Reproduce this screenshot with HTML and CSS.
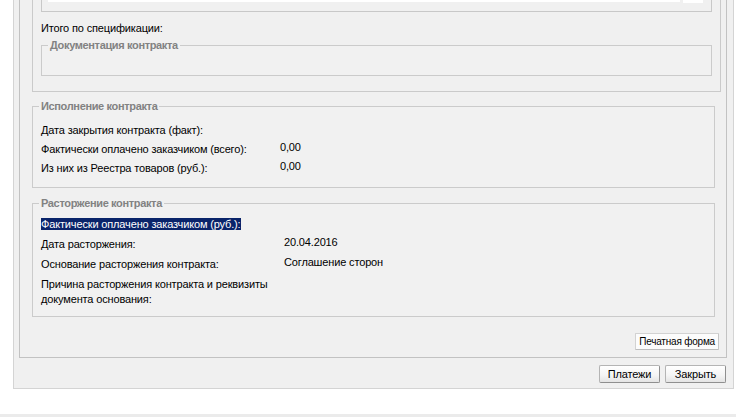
FILE: index.html
```html
<!DOCTYPE html>
<html lang="ru">
<head>
<meta charset="utf-8">
<title>Контракт</title>
<link rel="stylesheet" href="styles.css">
</head>
<body>
<div class="window">
  <div class="panel">
    <div class="spec">
      <div class="spec-table"><div class="tbl-white"></div><div class="tbl-scroll"></div></div>
      <div class="spec-total">Итого по спецификации:</div>
      <fieldset class="group group-doc">
        <legend>Документация контракта</legend>
        <div class="doc-body"></div>
      </fieldset>
    </div>

    <fieldset class="group group-exec">
      <legend>Исполнение контракта</legend>
      <div class="rows rows-exec">
        <div class="cell">Дата закрытия контракта (факт):</div><div class="cell value"></div>
        <div class="cell">Фактически оплачено заказчиком (всего):</div><div class="cell value">0,00</div>
        <div class="cell">Из них из Реестра товаров (руб.):</div><div class="cell value">0,00</div>
      </div>
    </fieldset>

    <fieldset class="group group-term">
      <legend>Расторжение контракта</legend>
      <div class="rows rows-term">
        <div class="cell"><span class="selected">Фактически оплачено заказчиком (руб.):</span></div><div class="cell value"></div>
        <div class="cell">Дата расторжения:</div><div class="cell value">20.04.2016</div>
        <div class="cell">Основание расторжения контракта:</div><div class="cell value">Соглашение сторон</div>
        <div class="cell">Причина расторжения контракта и реквизиты документа основания:</div><div class="cell value"></div>
      </div>
    </fieldset>

    <div class="panel-actions"><button class="btn btn-flat">Печатная форма</button></div>
  </div>
  <div class="window-actions">
    <button class="btn btn-window">Платежи</button>
    <button class="btn btn-window">Закрыть</button>
  </div>
</div>
<div class="footer-strip"></div>
</body>
</html>
```

FILE: styles.css
```css
html, body {
  margin: 0;
  padding: 0;
  background: #ffffff;
  overflow: hidden;
}
body {
  font-family: "Liberation Sans", Arial, sans-serif;
  font-size: 11px;
  line-height: 15px;
  letter-spacing: -0.15px;
  color: #000000;
}

.window {
  box-sizing: border-box;
  width: 721px;
  margin-left: 13px;
  background: #f0f0f0;
  border: 1px solid #d4d4d4;
  border-top: 0;
  padding: 0 6px 5px 5px;
}

.panel {
  border: 1px solid #c2c2c2;
  border-top: 0;
  padding: 0 5px 7px 12px;
  background: #f0f0f0;
}

.spec {
  border: 1px solid #cacaca;
  border-top: 0;
  padding: 0 8px 15px 8px;
}

.spec-table {
  height: 11px;
  border: 1px solid #c8c8c8;
  border-top: 0;
  display: flex;
  align-items: flex-start;
}
.tbl-white {
  margin-left: 6px;
  width: 632px;
  height: 2px;
  background: #ffffff;
}
.tbl-scroll {
  margin-left: 3px;
  width: 20px;
  height: 3px;
  background: #ffffff;
}

.spec-total {
  margin-top: 9px;
}

.group {
  margin: 0;
  padding: 0 6px;
  border: 1px solid #cbcbcb;
  min-width: 0;
  background: #f1f1f1;
}
.group legend {
  padding: 0 2px;
  font-weight: bold;
  color: #828282;
  line-height: 13px;
  letter-spacing: -0.35px;
}

.group-doc {
  margin-top: 3px;
}
.doc-body {
  height: 23px;
}

.group-exec {
  margin: 8px 6px 0 0;
  padding-bottom: 9px;
}
.group-term {
  margin: 9px 6px 0 0;
  padding-bottom: 7px;
}

.rows {
  display: grid;
  padding-left: 2px;
}
.rows-exec {
  grid-template-columns: 239px 1fr;
  padding-top: 8px;
}
.rows-term {
  grid-template-columns: 243px 1fr;
  padding-top: 4px;
}
.rows-exec .cell {
  padding: 2px 0;
}
.rows-term .cell {
  padding: 3px 0 2px;
}
.value {
  margin-top: -2px;
}

.selected {
  background: #0a246a;
  color: #ffffff;
}

.panel-actions {
  display: flex;
  justify-content: flex-end;
  margin-top: 16px;
  padding-right: 2px;
}

.btn {
  font-family: "Liberation Sans", Arial, sans-serif;
  font-size: 11px;
  line-height: 14px;
  letter-spacing: -0.15px;
  color: #000000;
  margin: 0;
  white-space: nowrap;
  cursor: default;
}

.btn-flat {
  box-sizing: border-box;
  height: 17px;
  padding: 0 3px;
  font-size: 10px;
  letter-spacing: -0.2px;
  background: #fcfcfc;
  border: 1px solid #d2d2d2;
  border-bottom-color: #bdbdbd;
  border-right-color: #c6c6c6;
  border-radius: 1px;
}

.window-actions {
  display: flex;
  justify-content: flex-end;
  gap: 5px;
  margin-top: 7px;
  margin-right: 1px;
}

.btn-window {
  box-sizing: border-box;
  height: 18px;
  width: 61px;
  padding: 0;
  background: linear-gradient(#ffffff, #f4f4f4 60%, #e4e4e4);
  border: 1px solid #b4b4b4;
  border-right-color: #8f8f8f;
  border-bottom-color: #8f8f8f;
  border-radius: 2px;
}

.footer-strip {
  margin-top: 25px;
  height: 3px;
  background: #ebebeb;
}
```
